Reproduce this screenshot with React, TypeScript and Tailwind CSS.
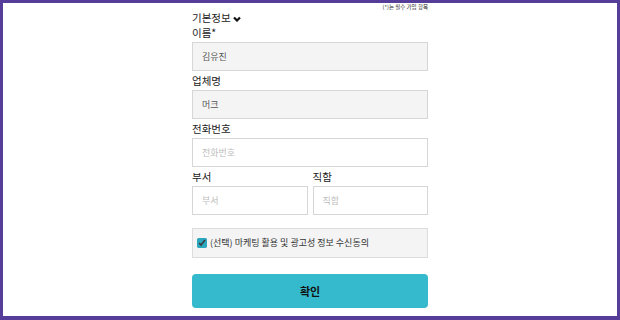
import React from 'react';

const font = { fontFamily: '"Noto Sans CJK KR", "Noto Sans", sans-serif' };

interface FieldProps {
  label: string;
  value?: string;
  placeholder?: string;
  filled?: boolean;
  className?: string;
}

// 라벨 + 입력칸 한 묶음
const Field: React.FC<FieldProps> = ({ label, value, placeholder, filled, className }) => (
  <div className={className}>
    <div className="text-[10.5px] leading-[14px] text-[#222]">{label}</div>
    <input
      readOnly
      defaultValue={value}
      placeholder={placeholder}
      className={`mt-[2px] block h-[29px] w-full border border-[#d6d6d6] px-[9px] text-[9px] text-[#555] outline-none placeholder:text-[#bdbdbd] ${
        filled ? 'bg-[#f4f4f4]' : 'bg-white'
      }`}
      style={font}
    />
  </div>
);

const App: React.FC = () => {
  return (
    <div
      className="h-[320px] w-[620px] border-t-[3px] border-r-[3px] border-b-[4px] border-l-[3px] border-[#563d99] bg-white"
      style={font}
    >
      <div className="mx-auto w-[236px]">
        <div className="h-[8px] text-right text-[5.5px] leading-[8px] text-[#222]">(*)는 필수 가입 항목</div>

        <div className="flex items-center gap-[2px] text-[10.5px] leading-[14px] text-[#222]">
          기본정보
          <svg width="8" height="6" viewBox="0 0 8 6" className="mt-[1px]">
            <polyline points="1,1.5 4,4.5 7,1.5" fill="none" stroke="#111" strokeWidth="2.2" />
          </svg>
        </div>

        <Field label="이름*" value="김유진" filled className="mt-[1px]" />
        <Field label="업체명" value="머크" filled className="mt-[3px]" />
        <Field label="전화번호" placeholder="전화번호" className="mt-[3px]" />

        <div className="mt-[3px] grid grid-cols-2 gap-[5px]">
          <Field label="부서" placeholder="부서" />
          <Field label="직함" placeholder="직함" />
        </div>

        <label className="mt-[13px] flex h-[30px] items-center gap-[3px] border border-[#dcdcdc] bg-[#f4f4f4] px-[4px] text-[9px] text-[#333]">
          <input type="checkbox" defaultChecked className="h-[10px] w-[10px] accent-[#2aa8c0]" />
          (선택) 마케팅 활용 및 광고성 정보 수신동의
        </label>

        <button className="mt-[16px] flex h-[34px] w-full items-center justify-center rounded-[4px] bg-[#35b9cc] text-[11px] font-bold text-[#111]">
          확인
        </button>
      </div>
    </div>
  );
};

export default App;
